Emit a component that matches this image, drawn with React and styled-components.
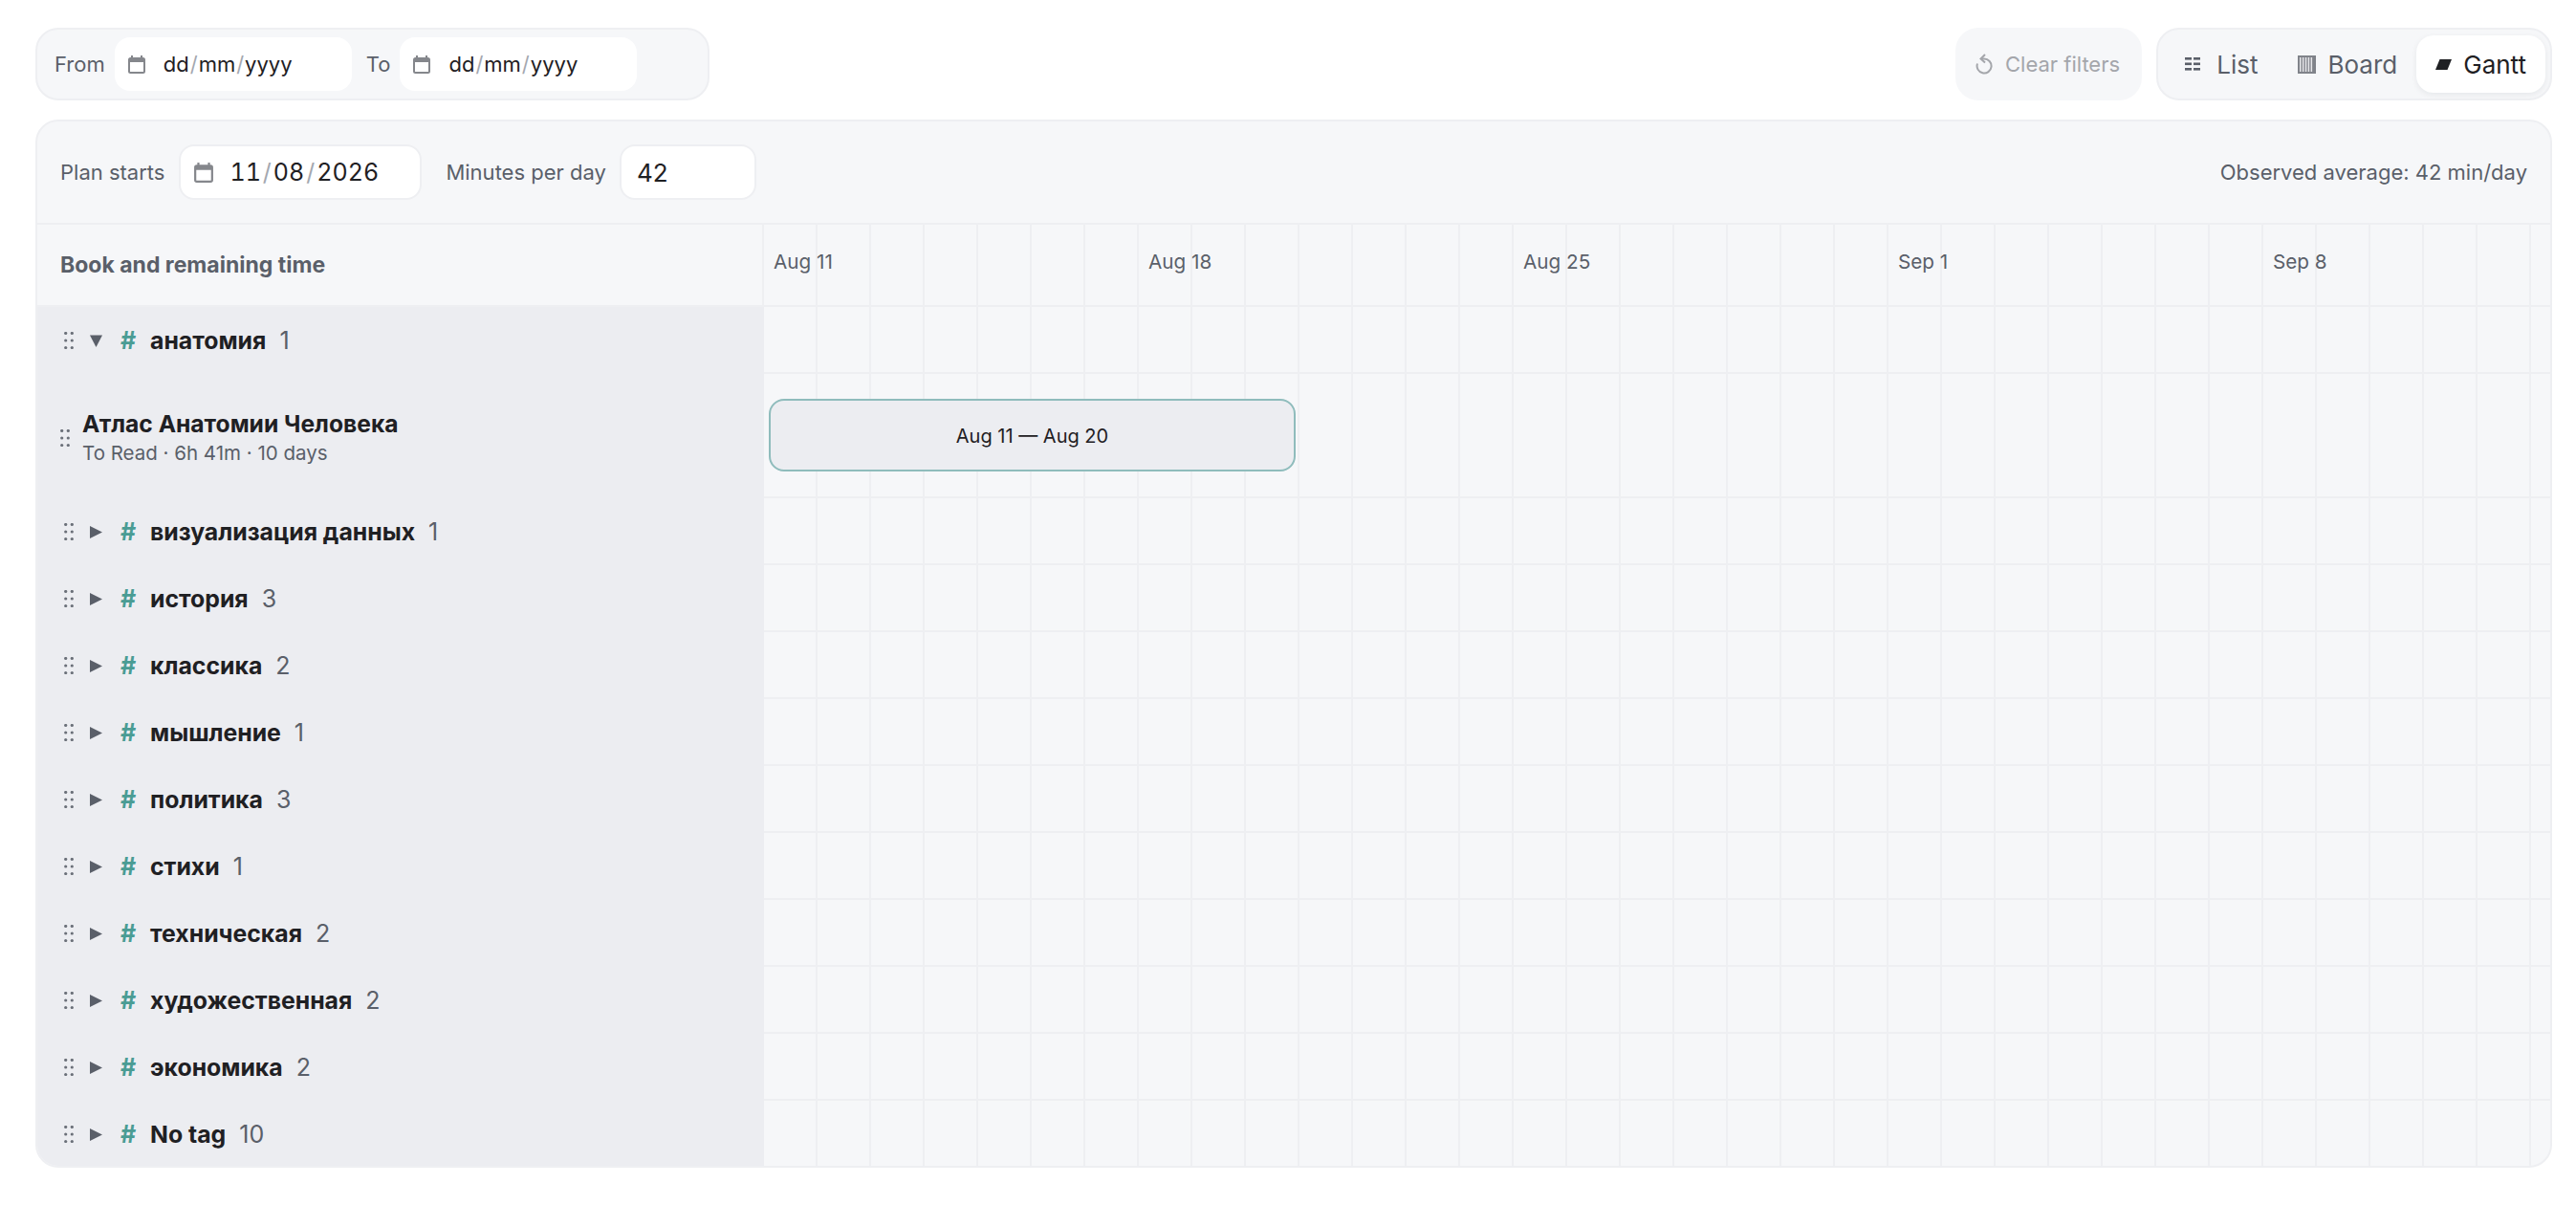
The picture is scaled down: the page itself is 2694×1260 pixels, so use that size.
import React from 'react';
import styled, { createGlobalStyle } from 'styled-components';

const GlobalStyle = createGlobalStyle`
  html, body {
    margin: 0;
    padding: 0;
    background: #fff;
    font-family: Inter, "Liberation Sans", sans-serif;
    color: #1f2023;
  }
  * {
    box-sizing: border-box;
  }
`;

const Page = styled.div`
  padding: 29px 25px 0 37px;
  height: 1260px;
  overflow: hidden;
`;

const Toolbar = styled.div`
  display: flex;
  align-items: stretch;
  height: 76px;
  margin-bottom: 20px;
`;

const FilterBox = styled.div`
  display: flex;
  align-items: center;
  width: 705px;
  padding: 0 18px;
  background: #f6f7f9;
  border: 2px solid #eeeff2;
  border-radius: 24px;
`;

const Label = styled.span`
  font-size: 22px;
  color: #5a5f69;
  white-space: nowrap;
`;

const FilterLabel = styled(Label)`
  margin-right: 10px;
`;

const DateField = styled.div`
  display: flex;
  align-items: center;
  flex: none;
  height: 56px;
  width: 248px;
  padding-left: 14px;
  margin-right: 15px;
  background: #fff;
  border-radius: 16px;
  font-size: 22px;
  color: #1f2023;

  svg {
    width: 18px;
    height: 19px;
    margin-right: 19px;
    flex: none;
  }
`;

const Slash = styled.span`
  color: #a4a8b0;
  margin: 0 ${p => p.$space || 1}px;
`;

const Spacer = styled.div`
  flex: 1;
`;

const ClearButton = styled.div`
  display: flex;
  align-items: center;
  gap: 13px;
  width: 195px;
  padding-left: 21px;
  margin-right: 15px;
  background: #f6f7f9;
  border-radius: 24px;
  font-size: 22px;
  color: #a4a6ab;
`;

const Switcher = styled.div`
  display: flex;
  align-items: center;
  justify-content: flex-end;
  width: 414px;
  padding: 0 5px;
  background: #f6f7f9;
  border: 2px solid #eeeff2;
  border-radius: 24px;
`;

const ViewTab = styled.div`
  display: flex;
  align-items: center;
  gap: ${p => p.$gap}px;
  height: 60px;
  padding: 0 ${p => p.$pad}px;
  border-radius: 18px;
  font-size: 26px;
  color: ${p => (p.$active ? '#1f2023' : '#5a5f69')};
  background: ${p => (p.$active ? '#fff' : 'transparent')};
  box-shadow: ${p => (p.$active ? '0 2px 6px rgba(20, 25, 40, 0.07)' : 'none')};
`;

const Panel = styled.div`
  position: relative;
  width: 2632px;
  height: 1096px;
  background: #f6f7f9;
  border: 2px solid #eeeff2;
  border-radius: 24px;
  overflow: hidden;
`;

const PlanBar = styled.div`
  display: flex;
  align-items: center;
  height: 108px;
  padding: 0 24px;
  border-bottom: 2px solid #eeeff2;
`;

const PlanField = styled(DateField)`
  width: 254px;
  height: 58px;
  margin: 0 25px 0 15px;
  border: 2px solid #eeeff2;
  font-size: 25px;
  font-variant-numeric: tabular-nums;

  svg {
    width: 20px;
    height: 21px;
    margin-right: 17px;
  }
`;

const NumberField = styled.div`
  display: flex;
  align-items: center;
  flex: none;
  width: 143px;
  height: 58px;
  margin-left: 14px;
  padding-left: 16px;
  background: #fff;
  border: 2px solid #eeeff2;
  border-radius: 16px;
  font-size: 26px;
`;

const Row = styled.div`
  display: flex;
  height: ${p => p.$height}px;
`;

const HeadCell = styled.div`
  display: flex;
  align-items: center;
  flex: none;
  width: 760px;
  padding-left: 24px;
  border-right: 2px solid #eeeff2;
  border-bottom: 2px solid #eeeff2;
  font-size: 23px;
  font-weight: 700;
  color: #5a5f69;
`;

const LeftCell = styled.div`
  display: flex;
  align-items: center;
  flex: none;
  width: 760px;
  padding: ${p => p.$top || 0}px 0 0 ${p => p.$indent}px;
  background: #ecedf1;
`;

const Track = styled.div`
  flex: 1;
  display: flex;
  border-bottom: 2px solid #eeeff2;
  background-image: repeating-linear-gradient(
    to right,
    transparent 0 54px,
    #eeeff2 54px 56px
  );
`;

const WeekLabel = styled.div`
  width: 392px;
  flex: none;
  padding: 26px 0 0 10px;
  font-size: 20.7px;
  color: #5a5f69;
`;

const Caret = styled.svg`
  width: 13px;
  height: 13px;
  margin: 0 19px 0 17px;
  fill: #5a5f69;
  flex: none;
`;

const Hash = styled.span`
  width: 31px;
  font-size: 25px;
  font-weight: 700;
  color: #4a9c94;
`;

const GroupName = styled.span`
  font-size: 24.8px;
  font-weight: 700;
  color: #1f2023;
`;

const GroupCount = styled.span`
  margin-left: 14px;
  font-size: 25px;
  color: #5a5f69;
`;

const BookText = styled.div`
  margin-left: 13px;
`;

const BookTitle = styled.div`
  font-size: 24.6px;
  font-weight: 700;
  color: #1f2023;
  line-height: 32px;
`;

const BookMeta = styled.div`
  font-size: 20.5px;
  color: #5a5f69;
  line-height: 30px;
`;

const GanttBar = styled.div`
  position: absolute;
  top: 290px;
  left: 765px;
  width: 551px;
  height: 76px;
  display: flex;
  align-items: center;
  justify-content: center;
  padding-top: 1px;
  background: #ecedf1;
  border: 2px solid #8fbcbc;
  border-radius: 16px;
  font-size: 20px;
  color: #1f2023;
`;

const CalendarIcon = () => (
  <svg viewBox="0 0 18 19" fill="none">
    <rect x="1" y="3" width="16" height="15" rx="1.5" stroke="#85878c" strokeWidth="2" />
    <rect x="1" y="3" width="16" height="4" fill="#85878c" />
    <rect x="3" y="0" width="2" height="4" fill="#85878c" />
    <rect x="13" y="0" width="2" height="4" fill="#85878c" />
  </svg>
);

const Handle = () => (
  <svg width="10" height="18" viewBox="0 0 10 18" fill="#6b7079" style={{ flex: 'none' }}>
    {[1.5, 9, 16.5].map(y => (
      <g key={y}>
        <circle cx="1.7" cy={y} r="1.6" />
        <circle cx="8.3" cy={y} r="1.6" />
      </g>
    ))}
  </svg>
);

const ListIcon = () => (
  <svg width="16" height="14" viewBox="0 0 16 14" fill="#5a5f69">
    {[0, 5.5, 11].map(y => (
      <g key={y}>
        <rect x="0" y={y} width="7" height="2.6" />
        <rect x="9" y={y} width="7" height="2.6" />
      </g>
    ))}
  </svg>
);

const BoardIcon = () => (
  <svg width="19" height="19" viewBox="0 0 19 19">
    <rect width="19" height="19" fill="#80838a" />
    {[2, 4.9, 7.8, 10.7, 13.6].map(x => (
      <rect key={x} x={x} y="2" width="1.5" height="15" fill="#e6e7ea" />
    ))}
  </svg>
);

const GanttIcon = () => (
  <svg width="17" height="11" viewBox="0 0 17 11" fill="#1f2023">
    <path d="M4.5 0H17L12.5 11H0Z" />
  </svg>
);

const ResetIcon = () => (
  <svg width="18" height="22" viewBox="0 0 18 22" fill="none" stroke="#a4a6ab" strokeWidth="2">
    <path d="M2 10.5A7.5 7.5 0 1 0 9 5.5H6" />
    <path d="M10 1L5.5 5.5L10 9.5" />
  </svg>
);

const DateText = ({ parts, space }) => (
  <span>
    {parts[0]}
    <Slash $space={space}>/</Slash>
    {parts[1]}
    <Slash $space={space}>/</Slash>
    {parts[2]}
  </span>
);

const groups = [
  ['визуализация данных', 1],
  ['история', 3],
  ['классика', 2],
  ['мышление', 1],
  ['политика', 3],
  ['стихи', 1],
  ['техническая', 2],
  ['художественная', 2],
  ['экономика', 2],
  ['No tag', 10]
];

const weeks = ['Aug 11', 'Aug 18', 'Aug 25', 'Sep 1', 'Sep 8'];

const GroupRow = ({ name, count, open }) => (
  <Row $height={70}>
    <LeftCell $indent={28}>
      <Handle />
      <Caret viewBox="0 0 13 13">
        {open ? <path d="M0 0.5H13L6.5 13Z" /> : <path d="M0 0L13 6.5L0 13Z" />}
      </Caret>
      <Hash>#</Hash>
      <GroupName>{name}</GroupName>
      <GroupCount>{count}</GroupCount>
    </LeftCell>
    <Track />
  </Row>
);

const App = () => (
  <>
    <GlobalStyle />
    <Page>
      <Toolbar>
        <FilterBox>
          <FilterLabel>From</FilterLabel>
          <DateField>
            <CalendarIcon />
            <DateText parts={['dd', 'mm', 'yyyy']} />
          </DateField>
          <FilterLabel>To</FilterLabel>
          <DateField>
            <CalendarIcon />
            <DateText parts={['dd', 'mm', 'yyyy']} />
          </DateField>
        </FilterBox>
        <Spacer />
        <ClearButton>
          <ResetIcon />
          Clear filters
        </ClearButton>
        <Switcher>
          <ViewTab $gap={17} $pad={21}>
            <ListIcon />
            List
          </ViewTab>
          <ViewTab $gap={13} $pad={20}>
            <BoardIcon />
            Board
          </ViewTab>
          <ViewTab $active $gap={12} $pad={20}>
            <GanttIcon />
            Gantt
          </ViewTab>
        </Switcher>
      </Toolbar>
      <Panel>
        <PlanBar>
          <Label>Plan starts</Label>
          <PlanField>
            <CalendarIcon />
            <DateText parts={['11', '08', '2026']} space={2} />
          </PlanField>
          <Label>Minutes per day</Label>
          <NumberField>42</NumberField>
          <Spacer />
          <Label>Observed average: 42 min/day</Label>
        </PlanBar>
        <Row $height={86}>
          <HeadCell>Book and remaining time</HeadCell>
          <Track>
            {weeks.map(w => (
              <WeekLabel key={w}>{w}</WeekLabel>
            ))}
          </Track>
        </Row>
        <GroupRow name="анатомия" count={1} open />
        <Row $height={130}>
          <LeftCell $indent={24} $top={4}>
            <Handle />
            <BookText>
              <BookTitle>Атлас Анатомии Человека</BookTitle>
              <BookMeta>To Read · 6h 41m · 10 days</BookMeta>
            </BookText>
          </LeftCell>
          <Track />
        </Row>
        {groups.map(([name, count]) => (
          <GroupRow key={name} name={name} count={count} />
        ))}
        <GanttBar>Aug 11 — Aug 20</GanttBar>
      </Panel>
    </Page>
  </>
);

export default App;
